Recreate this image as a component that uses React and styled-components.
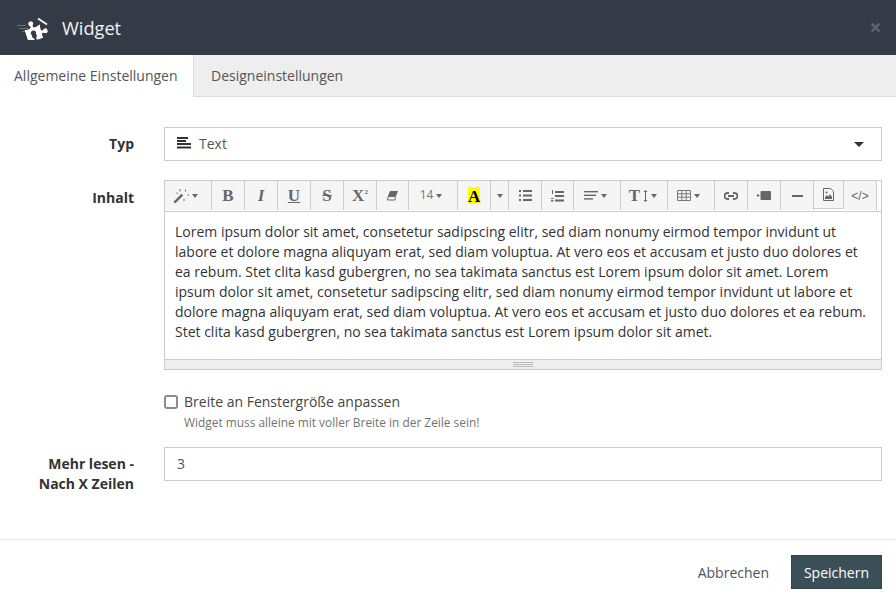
import React from 'react';
import styled, { createGlobalStyle } from 'styled-components';
import { FaPuzzlePiece, FaTimes } from 'react-icons/fa';

const Global = createGlobalStyle`
  html, body { margin: 0; padding: 0; background: #fff; }
  body { font-family: "Open Sans", "Liberation Sans", sans-serif; font-size: 14px; color: #333; }
`;

const Page = styled.div`width: 896px; height: 599px; overflow: hidden; display: flex; flex-direction: column;`;
const Header = styled.header`
  height: 55px; background: #343b46; display: flex; align-items: center; padding: 0 14px 0 16px; box-sizing: border-box; color: #fff;
`;
const Logo = styled.svg`width: 34px; height: 24px; margin-right: 12px; flex: none;`;
const Title = styled.h1`margin: 0; font-size: 18.2px; font-weight: 400; line-height: 24px; flex: 1; color: #f2f3f4;`;
const Close = styled.span`color: #5d6570; display: flex; font-size: 13px; margin-right: 0;`;
const Tabs = styled.nav`height: 42px; display: flex; background: #eee; border-bottom: 1px solid #ddd; box-sizing: border-box;`;
const Tab = styled.div`
  box-sizing: border-box; height: ${p => (p.$active ? 42 : 41)}px; width: ${p => p.$w}px; padding-left: ${p => p.$pad}px; line-height: 41px; font-size: 14px; color: #555;
  background: ${p => (p.$active ? '#fff' : 'transparent')}; border-right: ${p => (p.$active ? '1px solid #ddd' : '0')};
`;
const Form = styled.main`flex: 1; padding-top: 30px; display: flex; flex-direction: column;`;
const Row = styled.div`display: flex; margin: ${p => p.$mt || 0}px 0 ${p => p.$mb || 0}px;`;
const Label = styled.label`
  width: 134px; flex: none; text-align: right; font-weight: 700; font-size: 14px; line-height: 20px; color: #333; padding-top: ${p => p.$pt}px; box-sizing: border-box;
`;
const Field = styled.div`margin-left: 30px; width: 718px; flex: none;`;
const Select = styled.div`
  height: 34px; box-sizing: border-box; border: 1px solid #ccc; display: flex; align-items: center; padding: 0 17px 2px 12px; color: #555; font-size: 14px;
`;
const SelectIcon = styled.svg`width: 14px; height: 12px; margin-right: 8px; flex: none;`;
const SelectText = styled.span`flex: 1;`;
const Caret = styled.span`width: 0; height: 0; border-left: 5px solid transparent; border-right: 5px solid transparent; border-top: 5px solid #333; position: relative; top: 1px;`;
const Editor = styled.div`border: 1px solid #ccc; height: 190px; box-sizing: border-box; display: flex; flex-direction: column;`;
const Toolbar = styled.div`height: 30px; display: flex; background: #fff; border-bottom: 1px solid #ccc; flex: none;`;
const Tool = styled.div`
  box-sizing: border-box; width: ${p => p.$w}px; height: 29px; background: #f5f5f5; border-right: 1px solid #ccc; padding-right: ${p => p.$pr || 0}px;
  ${p => p.$short ? 'border-bottom: 1px solid #ccc; height: 28px;' : ''}
  display: flex; align-items: center; justify-content: center; gap: 3px; color: #666; font-size: 12px; flex: none;
`;
const ToolEnd = styled.div`flex: 1; background: #fff;`;
const Ico = styled.svg`width: ${p => p.$w || 14}px; height: ${p => p.$h || 14}px; flex: none; fill: #666; stroke: none;`;
const Glyph = styled.span`
  font-family: "Liberation Serif", serif; font-weight: 700; font-size: ${p => p.$size || 17}px; line-height: 1; color: #666;
  font-style: ${p => (p.$italic ? 'italic' : 'normal')}; text-decoration: ${p => p.$deco || 'none'};
`;
const Sup = styled.sup`font-size: 7px; line-height: 0; vertical-align: 7px;`;
const Mark = styled.span`
  background: #ff0; color: #000; font-family: "Liberation Serif", serif; font-weight: 700; font-size: 17px; width: 12px; height: 17px; line-height: 19px; display: block; text-align: center;
`;
const Down = styled.span`width: 0; height: 0; border-left: 3px solid transparent; border-right: 3px solid transparent; border-top: 4px solid #666; flex: none;`;
const Size = styled.span`font-size: 12px; color: #777; position: relative; top: -1px;`;
const Code = styled.span`font-family: "Liberation Sans", sans-serif; font-size: 12px; color: #666;`;
const Body = styled.div`flex: 1; padding: 10px 10px 0; font-size: 14px; line-height: 20px; color: #333;`;
const Resize = styled.div`height: 10px; background: #eee; border-top: 1px solid #ccc; display: flex; justify-content: center; align-items: center; flex: none; box-sizing: border-box;`;
const Grip = styled.span`display: block; width: 20px; height: 5px; border-top: 1px solid #bbb; border-bottom: 1px solid #bbb; box-sizing: border-box; background: linear-gradient(#bbb,#bbb) center/100% 1px no-repeat;`;
const CheckRow = styled.div`display: flex; align-items: center; height: 20px; margin-top: 21px; color: #444; font-size: 14px;`;
const Box = styled.span`
  width: 14px; height: 14px; box-sizing: border-box; border: 2px solid #8a8a98; border-radius: 3px; margin-right: 6px; background: #fff; flex: none; position: relative; top: 1px;
`;
const Help = styled.div`font-size: 11.9px; line-height: 17px; color: #737373; margin: 3px 0 0 20px;`;
const Input = styled.div`height: 34px; box-sizing: border-box; border: 1px solid #ccc; padding: 0 12px; line-height: 31px; color: #555;`;
const Footer = styled.footer`
  height: 60px; border-top: 1px solid #e5e5e5; display: flex; align-items: flex-start; justify-content: flex-end; padding: 15px 14px 0 0; box-sizing: border-box; flex: none;
`;
const Cancel = styled.button`
  border: 0; background: none; font: inherit; color: #4a555c; font-size: 14px; height: 34px; padding: 0; margin-right: 22px;
`;
const Save = styled.button`
  border: 1px solid #32444d; background: #3b4f59; color: #fff; font: inherit; font-size: 14px; height: 34px; width: 91px; padding: 0;
`;

const Lines = ({ rows }) => (
  <>
    {rows.map(([x, y, len, t], i) => <rect key={i} x={x} y={y} width={len} height={t} />)}
  </>
);

export default function App() {
  return (
    <Page>
      <Global />
      <Header>
        <Logo viewBox="0 0 34 24">
          <path d="M1 9.5h9M3 12.5h9M6 15.5h4" stroke="#6b717a" strokeWidth="1" fill="none" />
          <g transform="translate(9 3) rotate(-18 11 11)"><FaPuzzlePiece size={22} color="#fff" /></g>
          <circle cx="17.5" cy="17" r="2.6" fill="#343b46" />
          <path d="M21 3l9 6" stroke="#343b46" strokeWidth="4" fill="none" />
          <path d="M22 2.5l9 6" stroke="#fff" strokeWidth="1.6" fill="none" />
        </Logo>
        <Title>Widget</Title>
        <Close><FaTimes /></Close>
      </Header>
      <Tabs>
        <Tab $active $w={194} $pad={14}>Allgemeine Einstellungen</Tab>
        <Tab $w={200} $pad={17}>Designeinstellungen</Tab>
      </Tabs>
      <Form>
        <Row $mb={19}>
          <Label $pt={7}>Typ</Label>
          <Field>
            <Select>
              <SelectIcon viewBox="0 0 14 12" fill="#333">
                <Lines rows={[[0, 0, 11, 2], [0, 3, 9, 2], [0, 6, 14, 2], [0, 9.5, 14, 2]]} />
              </SelectIcon>
              <SelectText>Text</SelectText>
              <Caret />
            </Select>
          </Field>
        </Row>
        <Row>
          <Label $pt={8}>Inhalt</Label>
          <Field>
            <Editor>
              <Toolbar>
                <Tool $w={47} $pr={5}>
                  <Ico viewBox="0 0 16 16" $w={16} $h={16}>
                    <path d="M0.5 13.8L8.5 5.8 10.2 7.5 2.2 15.5z" />
                    <path d="M7 1v2.4M12.5 1.5v2M14.5 7h2M11 11v2M3.5 4.5L5 6" stroke="#666" strokeWidth="1" fill="none" />
                  </Ico>
                  <Down />
                </Tool>
                <Tool $w={33}><Glyph>B</Glyph></Tool>
                <Tool $w={33}><Glyph $italic>I</Glyph></Tool>
                <Tool $w={33}><Glyph $deco="underline">U</Glyph></Tool>
                <Tool $w={33}><Glyph $deco="line-through">S</Glyph></Tool>
                <Tool $w={33}><Glyph>X<Sup>2</Sup></Glyph></Tool>
                <Tool $w={32}>
                  <Ico viewBox="0 0 11 11" $w={11} $h={11}>
                    <path d="M3 1h8L9 6H1z" />
                    <path d="M1.2 6.5h7.3L8 10H0.5z" fill="none" stroke="#666" strokeWidth="1" />
                  </Ico>
                </Tool>
                <Tool $w={49} $pr={4}><Size>14</Size><Down /></Tool>
                <Tool $w={33}><Mark>A</Mark></Tool>
                <Tool $w={18}><Down /></Tool>
                <Tool $w={33}>
                  <Ico viewBox="0 0 13 11" $w={13} $h={11}>
                    <Lines rows={[[0, 0, 2, 2], [0, 4.5, 2, 2], [0, 9, 2, 2], [4, 0, 9, 2], [4, 4.5, 9, 2], [4, 9, 9, 2]]} />
                  </Ico>
                </Tool>
                <Tool $w={32}>
                  <Ico viewBox="0 0 13 12" $w={13} $h={12}>
                    <Lines rows={[[1, 0, 1, 4], [0, 8, 2.5, 1], [0, 10, 2.5, 1.5], [4, 1, 9, 2], [4, 5, 9, 2], [4, 9.5, 9, 2]]} />
                  </Ico>
                </Tool>
                <Tool $w={47} $pr={4}>
                  <Ico viewBox="0 0 14 9" $w={14} $h={9}>
                    <Lines rows={[[0, 0, 14, 1.4], [0, 3.6, 12, 1.4], [0, 7.2, 9, 1.4]]} />
                  </Ico>
                  <Down />
                </Tool>
                <Tool $w={47} $pr={2}>
                  <Glyph $size={17}>T</Glyph>
                  <Ico viewBox="0 0 5 12" $w={5} $h={12}>
                    <path d="M2.5 0L4.5 2H3v8h1.5l-2 2-2-2H2V2H.5z" />
                  </Ico>
                  <Down />
                </Tool>
                <Tool $w={47} $pr={6}>
                  <Ico viewBox="0 0 14 11" $w={14} $h={11}>
                    <path d="M.5.5h13v10H.5zM.5 3.8h13M.5 7.2h13M4.8.5v10M9.2.5v10" fill="none" stroke="#777" strokeWidth="1" />
                  </Ico>
                  <Down />
                </Tool>
                <Tool $w={33}>
                  <Ico viewBox="0 0 14 8" $w={14} $h={8}>
                    <path d="M5 1H3.5a3 3 0 0 0 0 6H5M9 1h1.5a3 3 0 0 1 0 6H9M4 4h6" fill="none" stroke="#666" strokeWidth="1.8" />
                  </Ico>
                </Tool>
                <Tool $w={33}>
                  <Ico viewBox="0 0 14 9" $w={14} $h={9}>
                    <path d="M0 3l3 1.5L0 6z" />
                    <rect x="3.5" y="0" width="10.5" height="9" rx="1" />
                  </Ico>
                </Tool>
                <Tool $w={33}>
                  <Ico viewBox="0 0 11 2" $w={11} $h={2}><rect width="11" height="2" /></Ico>
                </Tool>
                <Tool $w={30} $short>
                  <Ico viewBox="0 0 11 13" $w={11} $h={13}>
                    <path d="M.5.5h7l3 3v9H.5z" fill="none" stroke="#666" strokeWidth="1" />
                    <path d="M2 11V9l2-2 1.5 1.5L7 6l2 3v2z" />
                    <circle cx="3.5" cy="4.5" r="1" />
                  </Ico>
                </Tool>
                <Tool $w={33}><Code>&lt;/&gt;</Code></Tool>
                <ToolEnd />
              </Toolbar>
              <Body>
                Lorem ipsum dolor sit amet, consetetur sadipscing elitr, sed diam nonumy eirmod tempor invidunt ut labore et dolore magna aliquyam erat, sed diam voluptua. At vero eos et accusam et justo duo dolores et ea rebum. Stet clita kasd gubergren, no sea takimata sanctus est Lorem ipsum dolor sit amet. Lorem ipsum dolor sit amet, consetetur sadipscing elitr, sed diam nonumy eirmod tempor invidunt ut labore et dolore magna aliquyam erat, sed diam voluptua. At vero eos et accusam et justo duo dolores et ea rebum. Stet clita kasd gubergren, no sea takimata sanctus est Lorem ipsum dolor sit amet.
              </Body>
              <Resize><Grip /></Resize>
            </Editor>
            <CheckRow><Box />Breite an Fenstergröße anpassen</CheckRow>
            <Help>Widget muss alleine mit voller Breite in der Zeile sein!</Help>
          </Field>
        </Row>
        <Row $mt={16}>
          <Label $pt={7}>Mehr lesen -<br />Nach X Zeilen</Label>
          <Field><Input>3</Input></Field>
        </Row>
      </Form>
      <Footer>
        <Cancel>Abbrechen</Cancel>
        <Save>Speichern</Save>
      </Footer>
    </Page>
  );
}
